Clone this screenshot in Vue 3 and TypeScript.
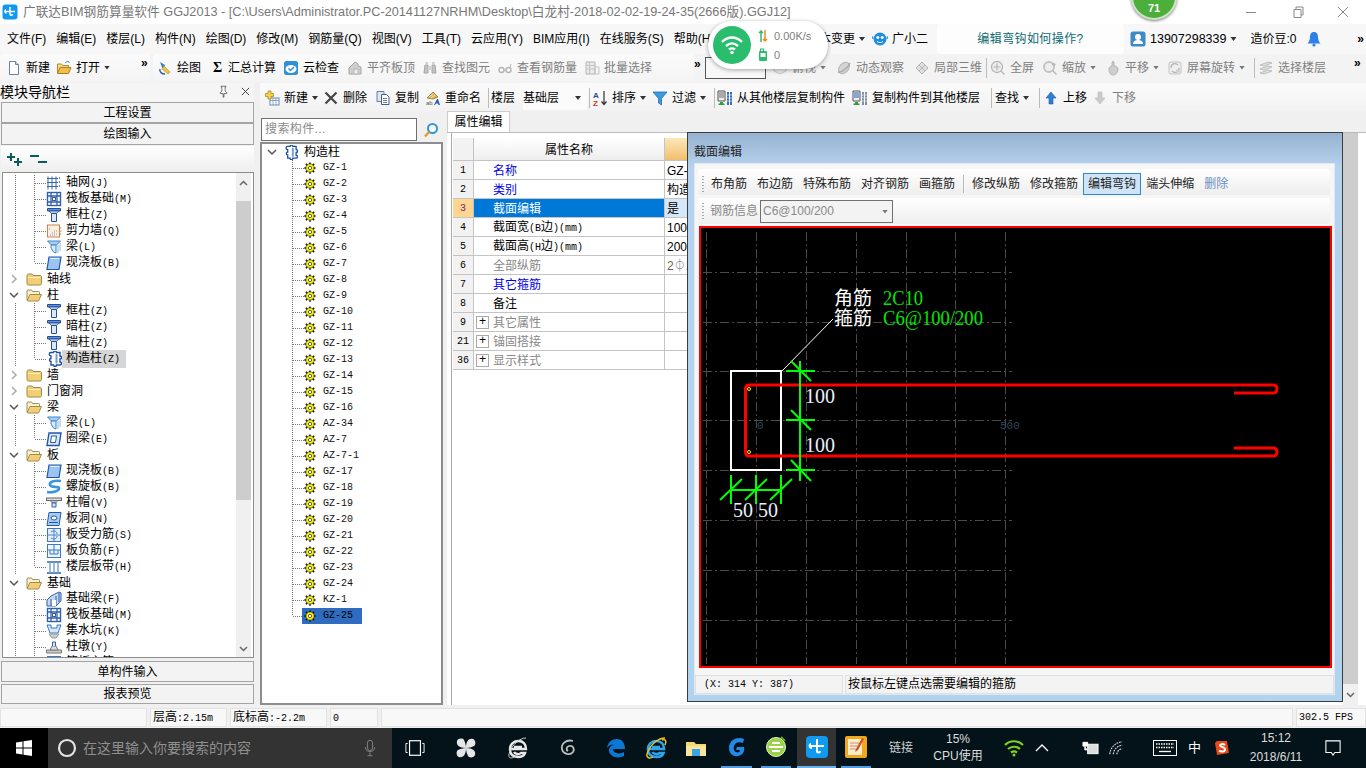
<script setup lang="ts">
type Tool = { ic?: string; label?: string; w: number; dis?: boolean; caret?: boolean; sep?: boolean; more?: boolean }
type NavRow = { t: string; ic: string; group?: boolean; open?: boolean; last?: boolean; sel?: boolean }

const icons: Record<string, string> = {
  doc: '<path d="M3.5 1.5h6l3 3v10h-9z" fill="#fff" stroke="#6f8099"/><path d="M9.5 1.5v3h3" fill="#cfd9e6" stroke="#6f8099"/>',
  open: '<path d="M1.5 13V4h4l1 1.5h6V8" fill="#f6dc8a" stroke="#b08a2c"/><path d="M1.5 13.5l2.5-6h11l-2.5 6z" fill="#f2bf4a" stroke="#a87f22"/><path d="M9 3l3-2 1.5 2" fill="none" stroke="#4a90d0"/>',
  draw: '<path d="M3 2l5 3-2 5z" fill="#3f7fd0"/><path d="M7 6l6 6-2 2-6-5z" fill="#f0c04a" stroke="#b08a2c" stroke-width=".6"/><path d="M3 9c-1 3 2 5 5 5" fill="none" stroke="#2a5ea8" stroke-width="1.4"/>',
  cloud: '<rect x="1" y="1" width="14" height="14" rx="2.5" fill="#2f8fd8"/><ellipse cx="8" cy="9" rx="5.5" ry="4" fill="#fff"/><path d="M5.5 8.5l2 2 3.500-3.500" fill="none" stroke="#2f8fd8" stroke-width="1.500"/>',
  plate: '<path d="M2 14V8l6-6 3 2v2l3 1v7z" fill="#c9c9c9" stroke="#999"/><path d="M7 14V9h4v5z" fill="#eee" stroke="#aaa"/>',
  binoc: '<path d="M2 13l1-8h3v8zM10 13V5h3l1 8z" fill="#bbb" stroke="#999"/><rect x="6" y="6" width="4" height="4" fill="#ccc"/><rect x="3.500" y="2" width="2.500" height="3" fill="#ccc"/><rect x="10" y="2" width="2.500" height="3" fill="#ccc"/>',
  glass: '<circle cx="4.500" cy="10" r="2.500" fill="none" stroke="#aaa" stroke-width="1.400"/><circle cx="11.500" cy="10" r="2.500" fill="none" stroke="#aaa" stroke-width="1.400"/><path d="M7 10h2M13 8l1-4" stroke="#aaa" fill="none"/>',
  pick: '<path d="M2 2h9v12H2z" fill="#e8e8e8" stroke="#aaa"/><path d="M2 5.500h9M2 9h9M5.500 2v12M11 7h4v7h-4z" fill="none" stroke="#bbb"/>',
  top: '<path d="M2 6l6-3 6 3-6 3z" fill="#ddd" stroke="#aaa"/><path d="M2 6v5l6 3 6-3V6" fill="#e8e8e8" stroke="#bbb"/>',
  orbit: '<ellipse cx="8" cy="8" rx="4.500" ry="6.500" transform="rotate(40 8 8)" fill="#d0d0d0" stroke="#aaa"/><path d="M2 12C5 13 12 8 14 3" fill="none" stroke="#999" stroke-width="1.300"/>',
  cube: '<path d="M2 8l6-6 6 6-6 6z" fill="#ddd" stroke="#aaa"/><path d="M5 5l6 6M8 2l3 3M5 11l6-6" stroke="#aaa" fill="none"/>',
  zoomfull: '<circle cx="7" cy="7" r="5.500" fill="#eee" stroke="#aaa" stroke-width="1.300"/><path d="M7 3.500v7M3.500 7h7M11 11l3.500 3.500" stroke="#aaa" stroke-width="1.200"/>',
  zoom: '<circle cx="7" cy="7" r="5" fill="#eee" stroke="#bbb" stroke-width="2"/><path d="M11 11l3.500 3.500M12 3v3M10.500 4.500h3" stroke="#aaa" stroke-width="1.400"/>',
  pan: '<path d="M4 9c0-2 2-3 3-3V3l1-2 1 2v3c2 0 4 1 4 3 0 3-2 6-5 6S4 12 4 9z" fill="#c8c8c8" stroke="#aaa"/>',
  rotate: '<rect x="2" y="2" width="12" height="12" rx="2" fill="#eee" stroke="#bbb"/><path d="M4 8a4 4 0 0 1 7-3M12 8a4 4 0 0 1-7 3" fill="none" stroke="#aaa" stroke-width="1.300"/><circle cx="11" cy="11" r="2" fill="#ccc"/>',
  floors: '<path d="M2 5l8-3 4 1-8 3zM2 9l8-3 4 1-8 3zM2 13l8-3 4 1-8 3z" fill="#ddd" stroke="#aaa" stroke-width=".8"/>',
  plus: '<rect x="6" y="8" width="9" height="7" fill="#fff" stroke="#6a88b8"/><path d="M6 10.500h9M9 8v7M12 8v7" stroke="#6a88b8" stroke-width=".7"/><path d="M4 1h3v2.500h2.500v3H7V9H4V6.500H1.500v-3H4z" fill="#f5d34a" stroke="#a98a1c" stroke-width=".8"/>',
  x: '<path d="M2.500 2.500l11 11M13.500 2.500l-11 11" stroke="#444" stroke-width="2.200"/>',
  copy: '<path d="M2 1.500h7v10H2z" fill="#dce6f4" stroke="#6a7f9c"/><path d="M6.500 4.500h5l2.500 2.500v7.500H6.500z" fill="#fff" stroke="#44608c"/><path d="M8 8.500h4M8 10.500h4M8 12.500h4" stroke="#44608c" stroke-width=".8"/>',
  rename: '<path d="M2 8l6-6 5 5-5 2z" fill="#d9b24a" stroke="#8a6d20" stroke-width=".7"/><path d="M4 7l4-3M6 8l4-3" stroke="#fff" stroke-width=".7"/><text x="1" y="15" font-size="6" fill="#555" font-family="Liberation Sans">ab</text><path d="M9 15l3-6h1l2 6h-1.500l-.5-1.500h-2L10 15z" fill="#2a5ea8"/>',
  sort: '<text x="1" y="7.500" font-size="8" font-weight="700" fill="#1f4fa0" font-family="Liberation Sans">A</text><text x="1" y="15.500" font-size="8" font-weight="700" fill="#c0392b" font-family="Liberation Sans">Z</text><path d="M12 1v13M9.500 11.500l2.500 3 2.500-3" fill="none" stroke="#333" stroke-width="1.200"/>',
  funnel: '<path d="M1 2h14L9.500 8.500V15l-3-2V8.500z" fill="#3d9ae0" stroke="#1f6fb0" stroke-width=".8"/>',
  cfrom: '<path d="M1 1h7v10H1z" fill="#eee" stroke="#555"/><path d="M2 3h5M2 5h5M2 7h5" stroke="#444" stroke-width=".8"/><path d="M3 12h3v1.500h1.500v1.500H1.500v-1.500H3z" fill="#2e9e3e"/><path d="M10 2h2v13h-2zM13 2h2v13h-2z" fill="#3a6fc0"/><path d="M10 5h5M10 8h5M10 11h5" stroke="#fff" stroke-width=".6"/>',
  cto: '<path d="M1 1h7v10H1z" fill="#eee" stroke="#555"/><path d="M2 3h5M2 5h5M2 7h5" stroke="#1f5fc0" stroke-width="1"/><path d="M3 12h3v1.500h1.500v1.500H1.500v-1.500H3z" fill="#2e9e3e"/><path d="M10 2h2v13h-2zM13 2h2v13h-2z" fill="#7d8ea8"/><path d="M10 5h5M10 8h5M10 11h5" stroke="#fff" stroke-width=".6"/>',
  up: '<path d="M8 2l5 6h-3v6H6V8H3z" fill="#2f7fd8" stroke="#1c5ca8" stroke-width=".6"/>',
  down: '<path d="M8 14l5-6h-3V2H6v6H3z" fill="#c4c4c4" stroke="#b0b0b0" stroke-width=".6"/>',
  folder: '<path d="M1 4.500c0-1 .5-1.500 1.500-1.500h3.500l1 1.500h7c1 0 1.500.5 1.500 1.500v6.500c0 1-.5 1.500-1.500 1.500h-11.500C1.500 14 1 13.500 1 12.500z" fill="#f3cf72" stroke="#a08a58"/><path d="M2 6.500h12" stroke="#fff2c4"/>',
  folderopen: '<path d="M1 13V4c0-.7.4-1 1-1h3.500l1 1.500h6c.6 0 1 .3 1 1V7" fill="#fbf0c8" stroke="#a08a58"/><path d="M1 13.500l3-6h11.500l-3 6.500H2z" fill="#f3cf72" stroke="#a08a58"/>',
  grid: '<path d="M2 1.500v13M6 1.500v13M10 1.500v13M1 3.500h11M1 7.500h11M1 11.500h11" stroke="#3567b5" stroke-width="1" fill="none"/><path d="M13 3h2M13 7h2M13 11h2" stroke="#3567b5" stroke-width="1.500" stroke-dasharray="1 1"/>',
  raft: '<rect x="1.500" y="1.500" width="13" height="13" fill="#fff" stroke="#2f5fa8" stroke-width="1.400"/><path d="M1 5h14M1 11h14M5 1v14M11 1v14" stroke="#2f5fa8" stroke-width="1.300"/><rect x="6.500" y="6.500" width="3" height="3" fill="#fff" stroke="#2f5fa8"/>',
  column: '<path d="M1.500 1.500h13v2.500h-13z" fill="#5a8ed8" stroke="#264f96"/><path d="M3 4h10l-2.500 2.500h-5z" fill="#b9d2f0" stroke="#264f96" stroke-width=".8"/><path d="M5.500 6.500h5v8h-5z" fill="#dbe8f8" stroke="#264f96"/>',
  wall: '<rect x="1.500" y="2" width="12" height="12" fill="#fbeee2" stroke="#d2814a"/><path d="M3 6h2M6 10h3M4 12h6M8 8h4M10 11h2" stroke="#999" stroke-dasharray="1 1"/><path d="M13.500 5h2M13.500 8h2M13.500 11h2" stroke="#d2814a"/>',
  beam: '<path d="M1.500 2h13l-4 4h-5z" fill="#a9cdf0" stroke="#3a86d0"/><path d="M5 6h5v8l-2.500-1L5 9z" fill="#d8e9fa" stroke="#3a86d0"/><path d="M12 6v8M14 4v8" stroke="#8ab8e6"/>',
  slab: '<path d="M3 2h12l-2 12.500H1z" fill="#9cc4f0" stroke="#1f57b0" stroke-width="1.200"/><path d="M4 3.500h9" stroke="#e4f0fc"/>',
  ring: '<path d="M3 2h12l-2 12.500H1z" fill="#dbe9f8" stroke="#1f57b0" stroke-width="1.400"/><path d="M5.500 5h5l-1 6.500h-5z" fill="#fff" stroke="#1f57b0"/>',
  puzzle: '<path d="M5 1.500h2.500a1.500 1.500 0 0 1 3 0H14V5a1.500 1.500 0 0 1 0 3v3a1.500 1.500 0 0 1 0 3h-3.500a1.500 1.500 0 0 1-3 0H5v-3.500a1.500 1.500 0 0 1 0-3V5a1.500 1.500 0 0 1 0-3.500z" fill="#fff" stroke="#1f4fa0" stroke-width="1.400"/><path d="M10.500 3v9.500" stroke="#6f9ad8" stroke-width="2"/>',
  spiral: '<path d="M15 2C8 1 3 3 4 6c1 3 8 1 9 3 1 3-7 5-12 4" fill="none" stroke="#3a94e0" stroke-width="2.600"/>',
  cap: '<rect x="0.500" y="3" width="15" height="2.500" fill="#ddd" stroke="#666"/><path d="M4 5.500h8L10 8H6z" fill="#bbb" stroke="#666" stroke-width=".6"/><path d="M6 8h4v4H6z" fill="#d9e8f8" stroke="#2f5fa8"/>',
  hole: '<path d="M3 1.500h12l-2 13H1z" fill="#a9cbf0" stroke="#1f57b0"/><ellipse cx="8" cy="7" rx="3" ry="2" fill="#fff" stroke="#1f57b0"/><path d="M3 11.500h9" stroke="#1f57b0"/>',
  rebar: '<rect x="1.500" y="1.500" width="13" height="13" fill="#e4eefa" stroke="#3a78c8"/><path d="M8 1.500v13M2 8h12M5 5c3-2 6-1 6 2M5 11c3 2 6 1 6-2" fill="none" stroke="#3a78c8" stroke-width=".9"/>',
  neg: '<rect x="1.500" y="1.500" width="13" height="13" fill="#eef5fc" stroke="#3a78c8"/><path d="M2 7h12M8 1.500V11M4 7v4h8V7" fill="none" stroke="#3a78c8"/>',
  band: '<path d="M1 3h14M1 14h14" stroke="#2f5fa8" stroke-width="1.300"/><path d="M4 3v11M8 3v11M12 3v11" stroke="#7aa2d8" stroke-width="1.500"/>',
  fbeam: '<path d="M1 15V9l4-4 8-4 2 1v8l-5 5z" fill="#c3d9f2" stroke="#2f5fa8"/><path d="M5 15V8M10 14V5M13 2v9" stroke="#2f5fa8"/><path d="M6 9h4v6H6z" fill="#fff"/>',
  pit: '<path d="M1 2h4v3h6V2h4l-3 8H4z" fill="#d9e8f8" stroke="#3a78c8"/><path d="M3 11h10l-3 4H6z" fill="#ccc" stroke="#999"/>',
  pier: '<path d="M0.500 11h15v3h-15z" fill="#ccc" stroke="#777"/><path d="M4 11l2-4h4l2 4z" fill="#ddd" stroke="#777"/><path d="M6.500 7V3h3v4" fill="#d9e8f8" stroke="#2f5fa8"/>',
  gear: '<path d="M8 .5v3M8 12.500v3M.5 8h3M12.500 8h3M2.500 2.500l2 2M11.500 11.500l2 2M13.500 2.500l-2 2M4.500 11.500l-2 2" stroke="#111" stroke-width="2"/><circle cx="8" cy="8" r="5.500" fill="#fff200" stroke="#222" stroke-width=".8"/><circle cx="8" cy="8" r="2.200" fill="#fff" stroke="#333" stroke-width="1"/>',
  search: '<circle cx="9.500" cy="6.500" r="4.500" fill="#fff" stroke="#2f95d8" stroke-width="2"/><path d="M6 10l-4 4.500" stroke="#e89a2a" stroke-width="2.400"/>',
  pin: '<path d="M5 1.500h6v1H10v5l2 2v1H8.500V15h-1v-4.500H4v-1l2-2v-5H5z" fill="#fff" stroke="#333" stroke-width=".8"/>',
  blob: '<circle cx="8" cy="8" r="6.500" fill="#1e8fe0"/><circle cx="5.800" cy="6.500" r="1.500" fill="#fff"/><circle cx="10.200" cy="6.500" r="1.500" fill="#fff"/><path d="M5 10.500c2 1.500 4 1.500 6 0" stroke="#fff" fill="none"/><path d="M1 8L0 5M15 8l1-3" stroke="#1e8fe0"/>',
  user: '<rect x="0.500" y="0.500" width="15" height="15" rx="2.500" fill="#3d8ac8"/><circle cx="8" cy="6" r="3" fill="#fff"/><path d="M3 13c0-3 2.500-4 5-4s5 1 5 4z" fill="#fff"/>',
  bell: '<path d="M8 1c3 0 4 2.500 4 5 0 3 1 5 2.500 6.500h-13C3 11 4 9 4 6c0-2.500 1-5 4-5z" fill="#2f7fe8"/><circle cx="8" cy="14" r="1.600" fill="#2f7fe8"/>'
}

const row1a: Tool[] = [
  { ic: 'doc', label: '新建', w: 50 },
  { ic: 'open', label: '打开', w: 64, caret: true }
]
const row1b: Tool[] = [
  { ic: 'draw', label: '绘图', w: 54 },
  { label: '汇总计算', w: 72, ic: 'sigma' },
  { ic: 'cloud', label: '云检查', w: 64 },
  { ic: 'plate', label: '平齐板顶', w: 75, dis: true },
  { ic: 'binoc', label: '查找图元', w: 75, dis: true },
  { ic: 'glass', label: '查看钢筋量', w: 87, dis: true },
  { ic: 'pick', label: '批量选择', w: 70, dis: true }
]
const row1c: Tool[] = [
  { ic: 'orbit', label: '动态观察', w: 78, dis: true },
  { ic: 'cube', label: '局部三维', w: 69, dis: true },
  { sep: true, w: 7 },
  { ic: 'zoomfull', label: '全屏', w: 52, dis: true },
  { ic: 'zoom', label: '缩放', w: 63, dis: true, caret: true },
  { ic: 'pan', label: '平移', w: 62, dis: true, caret: true },
  { ic: 'rotate', label: '屏幕旋转', w: 83, dis: true, caret: true },
  { sep: true, w: 8 },
  { ic: 'floors', label: '选择楼层', w: 74, dis: true }
]
const row2a: Tool[] = [
  { ic: 'plus', label: '新建', w: 59, caret: true },
  { ic: 'x', label: '删除', w: 52 },
  { ic: 'copy', label: '复制', w: 50 },
  { ic: 'rename', label: '重命名', w: 61 },
  { sep: true, w: 5 }
]
const row2b: Tool[] = [
  { sep: true, w: 5 },
  { ic: 'sort', label: '排序', w: 60, caret: true },
  { ic: 'funnel', label: '过滤', w: 59, caret: true },
  { sep: true, w: 6 },
  { ic: 'cfrom', label: '从其他楼层复制构件', w: 135 },
  { ic: 'cto', label: '复制构件到其他楼层', w: 135 },
  { sep: true, w: 8 },
  { label: '查找', w: 40, caret: true },
  { sep: true, w: 8 },
  { ic: 'up', label: '上移', w: 49 },
  { ic: 'down', label: '下移', w: 50, dis: true }
]

const menus = ['文件(F)', '编辑(E)', '楼层(L)', '构件(N)', '绘图(D)', '修改(M)', '钢筋量(Q)', '视图(V)', '工具(T)', '云应用(Y)', 'BIM应用(I)', '在线服务(S)', '帮助(H)']
const sectionTools = ['布角筋', '布边筋', '特殊布筋', '对齐钢筋', '画箍筋', '|', '修改纵筋', '修改箍筋', '编辑弯钩', '端头伸缩', '删除']

const navRows: NavRow[] = [
  { t: '轴网(J)', ic: 'grid' }, { t: '筏板基础(M)', ic: 'raft' }, { t: '框柱(Z)', ic: 'column' },
  { t: '剪力墙(Q)', ic: 'wall' }, { t: '梁(L)', ic: 'beam' }, { t: '现浇板(B)', ic: 'slab', last: true },
  { t: '轴线', ic: 'folder', group: true },
  { t: '柱', ic: 'folderopen', group: true, open: true },
  { t: '框柱(Z)', ic: 'column' }, { t: '暗柱(Z)', ic: 'column' }, { t: '端柱(Z)', ic: 'column' },
  { t: '构造柱(Z)', ic: 'puzzle', last: true, sel: true },
  { t: '墙', ic: 'folder', group: true },
  { t: '门窗洞', ic: 'folder', group: true },
  { t: '梁', ic: 'folderopen', group: true, open: true },
  { t: '梁(L)', ic: 'beam' }, { t: '圈梁(E)', ic: 'ring', last: true },
  { t: '板', ic: 'folderopen', group: true, open: true },
  { t: '现浇板(B)', ic: 'slab' }, { t: '螺旋板(B)', ic: 'spiral' }, { t: '柱帽(V)', ic: 'cap' },
  { t: '板洞(N)', ic: 'hole' }, { t: '板受力筋(S)', ic: 'rebar' }, { t: '板负筋(F)', ic: 'neg' },
  { t: '楼层板带(H)', ic: 'band', last: true },
  { t: '基础', ic: 'folderopen', group: true, open: true },
  { t: '基础梁(F)', ic: 'fbeam' }, { t: '筏板基础(M)', ic: 'raft' }, { t: '集水坑(K)', ic: 'pit' },
  { t: '柱墩(Y)', ic: 'pier' }, { t: '筏板主筋(R)', ic: 'rebar' }
]

const gzNames = [
  ...Array.from({ length: 16 }, (_, i) => `GZ-${i + 1}`),
  'AZ-34', 'AZ-7', 'AZ-7-1',
  ...Array.from({ length: 8 }, (_, i) => `GZ-${i + 17}`),
  'KZ-1', 'GZ-25'
]

const props = [
  { n: '1', name: '名称', val: 'GZ-25', cls: 'blue' },
  { n: '2', name: '类别', val: '构造柱', cls: 'blue' },
  { n: '3', name: '截面编辑', val: '是', cls: 'picked' },
  { n: '4', name: '截面宽(B边)(mm)', val: '100', cls: '' },
  { n: '5', name: '截面高(H边)(mm)', val: '200', cls: '' },
  { n: '6', name: '全部纵筋', val: '2⏀10', cls: 'gray' },
  { n: '7', name: '其它箍筋', val: '', cls: 'blue' },
  { n: '8', name: '备注', val: '', cls: '' },
  { n: '9', name: '其它属性', val: '', cls: 'gray', plus: true },
  { n: '21', name: '锚固搭接', val: '', cls: 'gray', plus: true },
  { n: '36', name: '显示样式', val: '', cls: 'gray', plus: true }
]

const statusCells = [
  { t: '层高:2.15m', w: 77 },
  { t: '底标高:-2.2m', w: 97 },
  { t: '0', w: 48 }
]

// ascii runs get the narrow mono face, as SimSun half-width glyphs do
function runs(s: string) {
  return s.split(/([\x00-\x7f]+)/).filter(Boolean).map(p => ({ p, a: /^[\x00-\x7f]/.test(p) }))
}

const gridX = [706, 756, 806, 856, 906, 955, 1005]
const gridY = [272, 322, 371, 420, 470, 520, 570, 620]

const taskIcons = [
  { k: 'fan', w: 50, ml: 0 }, { k: 'ie0', w: 54, ml: 0 }, { k: 'swirl', w: 46, ml: 0 }, { k: 'edge', w: 50, ml: 0 }, { k: 'ie', w: 30, ml: 0 },
  { k: 'files', w: 50, ml: 0 }, { k: 'g', w: 31, ml: 0 }, { k: 'e360', w: 30, ml: 9 }, { k: 'glodon', w: 39, ml: 6 }, { k: 'note', w: 30, ml: 5 }
]
const taskSvg: Record<string, string> = {
  fan: '<path d="M12 12C5 12 2 9 3 5c1-3 6-3 7-1 1 2 2 5 2 8zM12 12c0-7 3-10 7-9 3 1 3 6 1 7-2 1-5 2-8 2zM12 12c7 0 10 3 9 7-1 3-6 3-7 1-1-2-2-5-2-8zM12 12c0 7-3 10-7 9-3-1-3-6-1-7 2-1 5-2 8-2z" fill="#e6e6e6"/>',
  ie0: '<path d="M4 13h16c0-5-3-8-7.500-8S4 8 4 13c0 5 3 8 8 8 3 0 6-1 7-4h-4c-2 2-6 1-7-1M8 11h8" fill="none" stroke="#e8e8e8" stroke-width="2.400"/><path d="M20 2C14 2 6 8 3 18c-1 4 2 5 5 3" fill="none" stroke="#d0d0d0" stroke-width="1"/>',
  swirl: '<path d="M17 5C10 3 5 8 6 13c1 5 8 7 11 3 2-3 0-7-4-6-3 1-3 4-1 5" fill="none" stroke="#bdbdbd" stroke-width="1.800"/>',
  edge: '<path d="M3 12C4 6 8 3 13 3c5 0 8 4 8 10H9c0 4 6 6 11 3v4c-6 3-14 1-15-5-.5-3 2-6 5-6-3-1-5 0-7 3z" fill="#0a78d7"/>',
  ie: '<path d="M5 13h15c0-5-3-8-7.500-8S4 8 4 13c0 5 3 8 8.500 8 3 0 6-1 7-4h-4c-2 2-6 1-7-1M8 11h8" fill="none" stroke="#2ea5ea" stroke-width="2.600"/><path d="M21 2C15 2 6 8 3 18c-1 4 3 5 6 3M18 4c3-1 5 0 3 5" fill="none" stroke="#f3c11f" stroke-width="1.400"/>',
  files: '<path d="M2 6h8l2 2h10v12H2z" fill="#f7d774"/><path d="M2 10h20v10H2z" fill="#fbe59a"/><path d="M8 13h8v7H8z" fill="#3aa3e8"/>',
  g: '<path d="M19 4C11 1 4 6 4 13c0 6 5 9 9 8 5-1 7-5 6-9h-7l-1 3h4c0 2-2 3-4 2-3-1-3-6 0-9 2-1 5-1 7 0z" fill="#1f8ae8"/>',
  e360: '<circle cx="12" cy="12" r="9.500" fill="#9bd24a" stroke="#e6f5c8"/><path d="M5 12h14M8 8h8M8 16h8" stroke="#fff" stroke-width="1.800"/><path d="M17 2l4 4" stroke="#5fa828" stroke-width="2"/>',
  glodon: '<rect x="1" y="1" width="22" height="22" rx="4" fill="#0f9af0"/><path d="M12 4v12c0 2 3 2 3 0M5 11h14M6 9c-2 0-2 4 1 4" fill="none" stroke="#fff" stroke-width="2"/>',
  note: '<rect x="1" y="1" width="22" height="22" rx="2" fill="#f0a91f"/><path d="M4 4h14v16H4z" fill="#fbeec8"/><path d="M6 8h10M6 11h10M6 14h7" stroke="#c88"/><path d="M18 3l-6 11-1 3 3-2 6-11z" fill="#d2541c"/>'
}
</script>

<template>
  <div class="win">
    <header class="title">
      <svg class="logo" viewBox="0 0 16 16"><rect x=".5" y=".5" width="15" height="15" rx="3" fill="#0f9af0"/><path d="M8 3v7c0 1.500 2.500 1.500 2.500 0M3 7.500h10M4 6c-1.500 0-1.500 3 .5 3" fill="none" stroke="#fff" stroke-width="1.500"/></svg>
      <span class="title-text">广联达BIM钢筋算量软件 GGJ2013 - [C:\Users\Administrator.PC-20141127NRHM\Desktop\白龙村-2018-02-02-19-24-35(2666版).GGJ12]</span>
      <div class="winbtns">
        <svg viewBox="0 0 46 20"><path d="M18 10.500h10" stroke="#888"/></svg>
        <svg viewBox="0 0 46 20"><path d="M20 7.500h7v8h-7zM22 7V5h7v8h-2" fill="none" stroke="#888"/></svg>
        <svg viewBox="0 0 46 20"><path d="M18 5l10 10M28 5L18 15" stroke="#888"/></svg>
      </div>
    </header>

    <nav class="menubar">
      <div class="menus">
        <span v-for="m in menus" :key="m">{{ m }}</span>
      </div>
      <div class="menu-extra">
        <span>版本变更</span><i class="caret" />
        <svg class="ic" viewBox="0 0 16 16" v-html="icons.blob" />
        <span>广小二</span>
      </div>
      <div class="ask">编辑弯钩如何操作?</div>
      <div class="account">
        <svg class="ic" viewBox="0 0 16 16" v-html="icons.user" />
        <span class="phone">13907298339</span><i class="caret" />
        <span class="beans">造价豆:0</span>
        <svg class="ic" viewBox="0 0 16 16" v-html="icons.bell" />
        <b class="more">»</b>
      </div>
    </nav>

    <div class="toolbar1">
      <div class="tgroup g1">
        <span v-for="t in row1a" :key="t.label" class="tool" :class="{ dis: t.dis }" :style="{ width: t.w + 'px' }">
          <svg class="ic" viewBox="0 0 16 16" v-html="icons[t.ic!]" />{{ t.label }}<i v-if="t.caret" class="caret" />
        </span>
        <b class="more g1-more">»</b>
      </div>
      <div class="tgroup g2">
        <span v-for="t in row1b" :key="t.label" class="tool" :class="{ dis: t.dis }" :style="{ width: t.w + 'px' }">
          <b v-if="t.ic === 'sigma'" class="sigma">Σ</b>
          <svg v-else class="ic" viewBox="0 0 16 16" v-html="icons[t.ic!]" />{{ t.label }}
        </span>
      </div>
      <b class="more g3-more">»</b>
      <div class="viewbox" />
      <span class="tool dis view-peek"><svg class="ic" viewBox="0 0 16 16" v-html="icons.top" />俯视<i class="caret" /></span>
      <span v-for="(t, i) in row1c" :key="i" :class="t.sep ? 'sep-cell' : ['tool', { dis: t.dis }]" :style="{ width: t.w + 'px' }">
        <i v-if="t.sep" class="sep" />
        <template v-else><svg class="ic" viewBox="0 0 16 16" v-html="icons[t.ic!]" />{{ t.label }}<i v-if="t.caret" class="caret" /></template>
      </span>
      <b class="more end-more">»</b>
    </div>

    <div class="work">
      <aside class="nav">
        <div class="nav-head">
          <span>模块导航栏</span>
          <svg class="ic pin" viewBox="0 0 16 16" v-html="icons.pin" />
          <svg class="navx" viewBox="0 0 10 10"><path d="M1 1l8 8M9 1L1 9" stroke="#333" /></svg>
        </div>
        <div class="nav-btn">工程设置</div>
        <div class="nav-btn second">绘图输入</div>
        <div class="nav-tools">
          <svg viewBox="0 0 20 16"><path d="M5 2v8M1 6h8M12 7v8M8 11h8" stroke="#0b5c5c" stroke-width="2" /></svg>
          <svg viewBox="0 0 20 16"><path d="M1 5h9M9 11h9" stroke="#0b5c5c" stroke-width="2" /></svg>
        </div>
        <div class="nav-body">
          <div class="nav-scroll">
            <div v-for="(r, i) in navRows" :key="i" class="nrow">
              <template v-if="r.group">
                <span class="chev">
                  <svg viewBox="0 0 10 10"><path :d="r.open ? 'M1 3l4 4 4-4' : 'M3 1l4 4-4 4'" fill="none" :stroke="r.open ? '#555' : '#aaa'" stroke-width="1.500" /></svg>
                </span>
                <svg class="ic" viewBox="0 0 16 16" v-html="icons[r.ic]" />
                <span class="nlabel glabel"><span v-for="(q, j) in runs(r.t)" :key="j" :class="{ mono: q.a }">{{ q.p }}</span></span>
              </template>
              <template v-else>
                <span class="g-a" />
                <span class="g-b" :class="{ last: r.last }" />
                <span class="g-c" />
                <svg class="ic" viewBox="0 0 16 16" v-html="icons[r.ic]" />
                <span class="nlabel" :class="{ sel: r.sel }"><span v-for="(q, j) in runs(r.t)" :key="j" :class="{ mono: q.a }">{{ q.p }}</span></span>
              </template>
            </div>
          </div>
          <div class="vscroll navs">
            <svg viewBox="0 0 15 16"><path d="M4 10l3.500-3.500L11 10" fill="none" stroke="#666" stroke-width="1.500" /></svg>
            <div class="thumb" />
            <div class="track" />
            <svg viewBox="0 0 15 16"><path d="M4 6l3.500 3.500L11 6" fill="none" stroke="#666" stroke-width="1.500" /></svg>
          </div>
        </div>
        <div class="nav-btn">单构件输入</div>
        <div class="nav-btn last-btn">报表预览</div>
      </aside>

      <section class="right">
        <div class="toolbar2">
          <span v-for="t in row2a" :key="t.w + (t.label || 's')" :class="t.sep ? 'sep-cell' : 'tool'" :style="{ width: t.w + 'px' }">
            <i v-if="t.sep" class="sep" />
            <template v-else><svg class="ic" viewBox="0 0 16 16" v-html="icons[t.ic!]" />{{ t.label }}<i v-if="t.caret" class="caret" /></template>
          </span>
          <span class="floor-lbl">楼层</span>
          <span class="floor-box">基础层<i class="caret" /></span>
          <span v-for="(t, i) in row2b" :key="i" :class="t.sep ? 'sep-cell' : ['tool', { dis: t.dis }]" :style="{ width: t.w + 'px' }">
            <i v-if="t.sep" class="sep" />
            <template v-else><svg v-if="t.ic" class="ic" viewBox="0 0 16 16" v-html="icons[t.ic]" /><span>{{ t.label }}</span><i v-if="t.caret" class="caret" /></template>
          </span>
        </div>

        <div class="panes">
          <div class="complist">
            <div class="searchrow">
              <div class="searchbox">搜索构件...</div>
              <svg class="ic searchic" viewBox="0 0 16 16" v-html="icons.search" />
            </div>
            <div class="comptree">
              <div class="crow root">
                <span class="cchev"><svg viewBox="0 0 10 10"><path d="M1 3l4 4 4-4" fill="none" stroke="#555" stroke-width="1.500" /></svg></span>
                <svg class="ic" viewBox="0 0 16 16" v-html="icons.puzzle" />
                <span class="rootlabel">构造柱</span>
              </div>
              <div v-for="(g, i) in gzNames" :key="g" class="crow">
                <span class="cg-b" :class="{ last: i === gzNames.length - 1 }" />
                <span class="cg-c" />
                <svg class="gear" viewBox="0 0 16 16" v-html="icons.gear" />
                <span class="gzlabel" :class="{ on: g === 'GZ-25' }">{{ g }}</span>
              </div>
            </div>
          </div>

          <div class="propspane">
            <div class="tabs"><span class="tab">属性编辑</span></div>
            <div class="propbody">
              <div class="ptable">
                <div class="prow phead">
                  <span class="pn" /><span class="pname">属性名称</span><span class="pval" />
                </div>
                <div v-for="p in props" :key="p.n" class="prow" :class="p.cls">
                  <span class="pn">{{ p.n }}</span>
                  <span class="pname">
                    <i v-if="p.plus" class="plusbox">+</i>
                    <span class="ptext"><span v-for="(q, j) in runs(p.name)" :key="j" :class="{ mono: q.a }">{{ q.p }}</span></span>
                  </span>
                  <span class="pval">{{ p.val }}</span>
                </div>
              </div>
              <div class="vscroll props-s">
                <div class="thumb grow" />
                <svg viewBox="0 0 15 16"><path d="M4 6l3.500 3.500L11 6" fill="none" stroke="#666" stroke-width="1.500" /></svg>
              </div>
            </div>
          </div>
        </div>
      </section>
    </div>

    <footer class="status">
      <span class="sc first-cell" />
      <span v-for="c in statusCells" :key="c.t" class="sc" :style="{ width: c.w + 'px' }"><span v-for="(q, j) in runs(c.t)" :key="j" :class="{ mono: q.a }">{{ q.p }}</span></span>
      <span class="sc flexcell" />
      <span class="sc fps">302.5 FPS</span>
    </footer>

    <div class="taskbar">
      <div class="start"><svg viewBox="0 0 16 16"><path d="M0 2.500l6.500-1v6H0zM7.500 1.300L16 0v7.500H7.500zM0 8.500h6.500v6l-6.500-1zM7.500 8.500H16V16l-8.500-1.300z" fill="#fff" /></svg></div>
      <div class="tsearch">
        <svg class="cortana" viewBox="0 0 20 20"><circle cx="10" cy="10" r="8" fill="none" stroke="#e4e4e4" stroke-width="2.200" /></svg>
        <span>在这里输入你要搜索的内容</span>
        <svg class="mic" viewBox="0 0 14 20"><rect x="4" y="1" width="6" height="12" rx="3" fill="none" stroke="#8a8a8a" /><path d="M1.500 9c0 7 11 7 11 0M7 15v4M4 19h6" fill="none" stroke="#8a8a8a" /></svg>
      </div>
      <svg class="taskview" viewBox="0 0 22 18"><rect x="5" y="1" width="12" height="16" fill="none" stroke="#fff" stroke-width="1.300" /><path d="M3 4H1v10h2M19 4h2v10h-2" fill="none" stroke="#fff" /></svg>
      <span v-for="t in taskIcons" :key="t.k" class="tapp" :class="[t.k]" :style="{ width: t.w + 'px', marginLeft: t.ml + 'px' }">
        <svg viewBox="0 0 24 24" v-html="taskSvg[t.k]" />
      </span>
      <span class="link">链接</span>
      <span class="cpu">15%<br>CPU使用</span>
      <svg class="twifi" viewBox="0 0 20 18"><path d="M1 6c5-5 13-5 18 0M4 10c3.500-3 8.500-3 12 0M7 13.500c2-1.500 4-1.500 6 0" fill="none" stroke="#7ed321" stroke-width="2.200" /><circle cx="10" cy="16" r="1.500" fill="#7ed321" /></svg>
      <svg class="tchev" viewBox="0 0 14 8"><path d="M1 7l6-6 6 6" fill="none" stroke="#fff" stroke-width="1.300" /></svg>
      <svg class="tplug" viewBox="0 0 18 14"><rect x="6" y="3" width="11" height="10" fill="#ddd" stroke="#fff" /><path d="M1 1h5v4H1zM3 5v4h3" fill="#fff" stroke="#fff" /></svg>
      <svg class="tnet" viewBox="0 0 16 16"><path d="M1 15C1 8 8 1 15 1M5 15c0-5 5-10 10-10M9 15c0-3 3-6 6-6" fill="none" stroke="#ddd" stroke-dasharray="2 1" stroke-width="1.300" /></svg>
      <svg class="tkbd" viewBox="0 0 24 16"><rect x=".5" y=".5" width="23" height="15" fill="none" stroke="#fff" /><path d="M3 4h18M3 7.500h18" stroke="#fff" stroke-dasharray="1.500 1" stroke-width="1.300" /><path d="M6 11.500h12" stroke="#fff" stroke-width="1.300" /></svg>
      <span class="tzh">中</span>
      <svg class="tsogou" viewBox="0 0 16 16"><path d="M3 1h10l2 12-12 2L1 3z" fill="#e8481c" /><path d="M11 5c-2-1.500-5-1-5 .5S11 7 11 9.500 7 12 5 10.500" fill="none" stroke="#fff" stroke-width="2" /></svg>
      <span class="clock">15:12<br>2018/6/11</span>
      <svg class="tnote" viewBox="0 0 18 18"><path d="M1 1h16v13h-6l-2 3-2-3H1z" fill="none" stroke="#fff" stroke-width="1.200" /></svg>
    </div>

    <!-- floating bits over the window -->
    <div class="dialog">
      <div class="dlg-title">截面编辑</div>
      <div class="dlg-inner">
        <div class="dlg-tools first">
          <i class="grip" />
          <template v-for="s in sectionTools" :key="s">
            <i v-if="s === '|'" class="sep" />
            <span v-else class="dtool" :class="{ active: s === '编辑弯钩', faded: s === '删除' }">{{ s }}</span>
          </template>
        </div>
        <div class="dlg-tools second">
          <i class="grip" />
          <span class="rebar-lbl">钢筋信息</span>
          <span class="combo">C6@100/200<i class="caret" /></span>
        </div>
        <svg class="canvas" viewBox="699 226 633 442">
          <rect x="700" y="227" width="631" height="440" fill="#000" stroke="#f00" stroke-width="2" />
          <g stroke="#4a4a4a" stroke-dasharray="9 3 2 3" fill="none">
            <path v-for="x in gridX" :key="x" :d="`M${x + .5} 232V664`" />
            <path v-for="y in gridY" :key="y" :d="`M703 ${y + .5}H1012`" />
          </g>
          <text x="757" y="429" class="dim0">0</text>
          <text x="1000" y="429" class="dim0">500</text>
          <path d="M782 371L833 319" stroke="#fff" fill="none" />
          <rect x="731" y="371" width="50" height="99" fill="none" stroke="#fff" stroke-width="2" />
          <path d="M1234 393H1273Q1277 393 1277 389Q1277 385 1273 385H749Q745.500 385 745.500 389V452Q745.500 456 749 456H1273Q1277 456 1277 452Q1277 448 1273 448H1234" fill="none" stroke="#f00" stroke-width="3" />
          <g fill="none" stroke="#ff0"><circle cx="749" cy="389" r="1.500" /><circle cx="749" cy="452" r="1.500" /></g>
          <g stroke="#0f0" stroke-width="2" fill="none">
            <path d="M800 361V481M786 371H815M786 420H815M786 470H815M791 361L811 381M791 410L811 430M791 460L811 481" />
            <path d="M731 490H781M731 475V504M756 475V504M781 475V504M720 500L742 479M745 500L767 479M770 500L792 479" />
          </g>
          <text x="834" y="305" class="cjk">角筋</text>
          <text x="834" y="325" class="cjk">箍筋</text>
          <text x="883" y="305" class="gtxt" textLength="40" lengthAdjust="spacingAndGlyphs">2C10</text>
          <text x="883" y="325" class="gtxt" textLength="100" lengthAdjust="spacingAndGlyphs">C6@100/200</text>
          <text x="805" y="403" class="wtxt">100</text>
          <text x="805" y="452" class="wtxt">100</text>
          <text x="733" y="517" class="wtxt">50</text>
          <text x="758" y="517" class="wtxt">50</text>
        </svg>
        <div class="dlg-status">
          <span class="ds-a">(X: 314 Y: 387)</span>
          <span class="ds-b">按鼠标左键点选需要编辑的箍筋</span>
        </div>
      </div>
    </div>

    <div class="netpill">
      <span class="wifi-disc">
        <svg viewBox="0 0 24 20"><path d="M2 7c6-6 14-6 20 0M6 11c4-3.500 8-3.500 12 0M9 14.500c2-1.500 4-1.500 6 0" fill="none" stroke="#fff" stroke-width="2.400" /><circle cx="12" cy="17.500" r="1.700" fill="#fff" /></svg>
      </span>
      <div class="net-lines">
        <span><svg viewBox="0 0 10 14"><path d="M3 13V2M1 4l2-2 2 2" fill="none" stroke="#2bbd6e" stroke-width="1.500" /><path d="M7 1v11M5 10l2 2 2-2" fill="none" stroke="#f0891f" stroke-width="1.500" /></svg>0.00K/s</span>
        <span><svg viewBox="0 0 10 14"><rect x="1" y="3" width="8" height="10" rx="1" fill="#2bbd6e" /><rect x="2.500" y="1" width="3" height="3" fill="none" stroke="#2bbd6e" /><rect x="2.500" y="5" width="5" height="4" fill="#fff" /></svg>0</span>
      </div>
    </div>

    <div class="score">71</div>
  </div>
</template>

<style scoped>
.win, .win * { box-sizing: border-box; }
.win {
  position: relative; width: 1366px; height: 768px; overflow: hidden;
  background: #f0f0f0; color: #000;
  font: 12px/16px "Liberation Sans", "Noto Sans CJK SC", sans-serif;
  display: flex; flex-direction: column;
}
.ic { width: 16px; height: 16px; flex: none; }
.mono { font-family: "Liberation Mono", monospace; font-size: 10px; }
.caret {
  display: inline-block; width: 6px; height: 4px; vertical-align: middle; flex: none;
  background: #333; clip-path: polygon(0 0, 100% 0, 50% 100%);
}
.sep { display: block; width: 1px; height: 20px; background: #bbb; }
.sep-cell { display: flex; align-items: center; justify-content: center; flex: none; }
.more { font: 700 12px/14px "Liberation Sans", sans-serif; }

/* title */
.title { height: 24px; flex: none; background: #fff; display: flex; align-items: center; padding-left: 2px; }
.logo { width: 16px; height: 16px; flex: none; }
.title-text { margin-left: 5px; font-size: 12.7px; color: #777; white-space: nowrap; }
.winbtns { margin-left: auto; display: flex; height: 20px; }
.winbtns svg { width: 46px; height: 20px; }

/* menu */
.menubar { height: 30px; flex: none; background: #f7f7f7; display: flex; align-items: center; font-size: 12px; }
.menus { display: flex; gap: 10px; padding-left: 7px; white-space: nowrap; width: 777px; flex: none; }
.menu-extra { display: flex; align-items: center; gap: 4px; width: 160px; flex: none; padding-left: 30px; white-space: nowrap; }
.menu-extra .ic { margin-left: 3px; }
.ask { width: 187px; flex: none; height: 30px; background: #fdfdfd; border-radius: 4px; color: #0d6b74; text-align: center; line-height: 30px; letter-spacing: .4px; }
.account { flex: 1; display: flex; align-items: center; padding-left: 6px; white-space: nowrap; }
.phone { margin: 0 4px 0 4px; font-size: 12.5px; }
.beans { margin-left: 14px; margin-right: 9px; }
.account .more { margin-left: auto; margin-right: 2px; }

/* top toolbar */
.toolbar1 { height: 29px; flex: none; background: #f3f3f3; display: flex; align-items: center; white-space: nowrap; position: relative; padding-bottom: 2px; }
.tgroup { height: 27px; display: flex; align-items: center; background: linear-gradient(#fbfbfb, #f4f4f4); border-radius: 3px; }
.g1 { width: 150px; padding-left: 6px; flex: none; }
.g1-more { margin-left: 21px; margin-bottom: 10px; }
.g2 { width: 541px; flex: none; margin-left: 3px; padding-left: 4px; }
.g3-more { width: 11px; margin-bottom: 8px; flex: none; }
.viewbox { width: 61px; height: 22px; border: 1px solid #555; background: #f8f8f8; flex: none; }
.view-peek { width: 70px; padding-left: 6px; }
.tool { display: inline-flex; align-items: center; gap: 4px; flex: none; white-space: nowrap; }
.tool.dis { color: #808080; }
.tool.dis .ic { opacity: .85; }
.tool.dis .caret { background: #777; }
.sigma { width: 13px; text-align: center; font: 700 14px/16px "Liberation Serif", serif; }
.end-more { margin-left: 22px; margin-bottom: 10px; }

/* layout */
.work { flex: 1; min-height: 0; display: flex; }

/* left nav */
.nav { width: 254px; flex: none; padding: 0 0 4px 1px; display: flex; flex-direction: column; }
.nav-head { height: 19px; flex: none; display: flex; align-items: center; font-size: 14px; margin-left: -1px; padding-bottom: 2px; background: #f5f5f5; }
.pin { margin-left: auto; width: 13px; height: 13px; margin-right: 11px; }
.navx { width: 9px; height: 9px; margin-right: 4px; }
.nav-btn { height: 21px; flex: none; background: #f3f3f3; border: 1px solid #a4a4a4; line-height: 20px; text-align: center; }
.nav-btn.second { height: 22px; line-height: 20px; }
.nav-btn.last-btn { margin-top: 2px; height: 20px; line-height: 19px; }
.nav-tools { height: 26px; flex: none; background: linear-gradient(#fff, #eeeeee); display: flex; align-items: center; gap: 3px; padding-left: 5px; margin-top: 1px; }
.nav-tools svg { width: 20px; height: 16px; }
.nav-body { flex: 1; min-height: 0; margin: 0 0 3px 1px; border: 1px solid #8d8d8d; background: #fff; display: flex; overflow: hidden; }
.nav-scroll { flex: 1; overflow: hidden; padding-top: 2px; }
.nrow { height: 16px; display: flex; align-items: center; white-space: nowrap; }
.chev { width: 23px; height: 16px; flex: none; display: flex; align-items: center; padding-left: 6px; }
.chev svg { width: 10px; height: 10px; }
.nlabel { margin-left: 4px; line-height: 16px; }
.glabel { margin-left: 5px; }
.g-a, .g-b { align-self: stretch; flex: none; background: linear-gradient(#777 50%, transparent 50%) right top / 1px 2px repeat-y; }
.g-a { width: 13px; }
.g-b { width: 19px; }
.g-b.last { align-self: flex-start; height: 8px; }
.g-c { width: 11px; height: 1px; flex: none; background: linear-gradient(90deg, #777 50%, transparent 50%) left top / 2px 1px repeat-x; }
.nlabel.sel { background: #d6d6d6; padding: 0 6px 0 4px; margin-left: 0; }
.vscroll { flex: none; background: #f0f0f0; display: flex; flex-direction: column; }
.vscroll svg { width: 15px; height: 16px; flex: none; }
.navs { width: 15px; margin-right: 2px; padding-top: 2px; }
.navs .thumb { height: 299px; margin-top: 10px; background: #cdcdcd; flex: none; }
.navs .track { flex: 1; }

/* right */
.right { flex: 1; min-width: 0; display: flex; flex-direction: column; padding-left: 6px; }
.toolbar2 { height: 28px; flex: none; display: flex; align-items: center; background: linear-gradient(#fbfbfb, #f2f2f2); white-space: nowrap; padding: 2px 0 0 4px; }
.floor-lbl { width: 32px; flex: none; }
.floor-box { width: 64px; flex: none; height: 24px; line-height: 24px; background: #fbfbfb; display: inline-flex; align-items: center; }
.floor-box .caret { margin-left: 16px; }
.panes { flex: 1; min-height: 0; display: flex; }

/* component list */
.complist { width: 183px; flex: none; display: flex; flex-direction: column; }
.searchrow { height: 31px; flex: none; display: flex; align-items: flex-end; padding-bottom: 1px; background: #f0f0f0; }
.searchbox { width: 156px; height: 23px; border: 1px solid #707070; background: #fff; color: #8a8a8a; line-height: 21px; padding-left: 3px; margin-left: 1px; letter-spacing: .4px; }
.searchic { margin: 0 0 3px 6px; }
.comptree { flex: 1; border: 2px solid #8d8d8d; background: #fff; margin-bottom: 3px; overflow: hidden; }
.crow { height: 16px; display: flex; align-items: center; white-space: nowrap; }
.cchev { width: 21px; flex: none; padding-left: 5px; display: flex; }
.cchev svg { width: 10px; height: 10px; }
.root .ic { width: 15px; height: 15px; }
.rootlabel { margin-left: 6px; }
.cg-b { width: 31px; flex: none; align-self: stretch; background: linear-gradient(#777 50%, transparent 50%) right top / 1px 2px repeat-y; }
.cg-b.last { align-self: flex-start; height: 8px; }
.cg-c { width: 11px; height: 1px; flex: none; background: linear-gradient(90deg, #777 50%, transparent 50%) left top / 2px 1px repeat-x; }
.gear { width: 12px; height: 12px; flex: none; position: relative; z-index: 1; }
.gzlabel { margin-left: 7px; font: 10px/16px "Liberation Mono", monospace; color: #111; }
.gzlabel.on { background: #2f6cc0; color: #000; margin-left: -14px; padding: 0 9px 0 21px; }

/* properties */
.propspane { flex: 1; min-width: 0; margin-left: 4px; display: flex; flex-direction: column; }
.tabs { height: 22px; flex: none; display: flex; align-items: flex-end; background: #f0f0f0; border-bottom: 1px solid #bbb; }
.tab { width: 63px; height: 21px; background: #fff; border: 1px solid #ccc; border-bottom: 0; text-align: center; line-height: 20px; }
.propbody { flex: 1; min-height: 0; display: flex; background: #fff; margin-bottom: 3px; }
.ptable { flex: 1; padding: 5px 0 0 1px; margin-left: 4px; font-size: 12px; border-left: 1px solid #aaa; }
.prow { display: grid; grid-template-columns: 21px 191px 1fr; height: 19px; border-bottom: 1px solid #c4c4c4; line-height: 18px; }
.prow > span { border-right: 1px solid #c4c4c4; display: flex; align-items: center; overflow: hidden; white-space: nowrap; padding-top: 1px; }
.phead { height: 23px; }
.phead .pname { justify-content: center; background: linear-gradient(#fff, #eee); padding-left: 0; }
.phead .pval { background: linear-gradient(#fce7b8, #f2bf6b); }
.pn { background: #f2f2f2; justify-content: center; font: 10px "Liberation Mono", monospace; }
.pname { padding-left: 19px; }
.pval { padding-left: 2px; }
.prow.blue .ptext { color: #0000e6; }
.prow.gray .ptext { color: #888; }
.prow.gray .pval { color: #666; }
.prow.picked .pn { background: #ffd590; color: #7a1f7a; }
.prow.picked .pname { background: #0078d7; color: #fff; }
.prow.picked .pval { background: #d6e8f8; }
.plusbox {
  width: 13px; height: 13px; border: 1px solid #aaa; margin-left: -17px; margin-right: 4px;
  font: normal 12px/11px "Liberation Mono", monospace; text-align: center; flex: none;
}
.props-s { width: 15px; margin-right: 8px; }
.props-s .grow { flex: 1; background: #cdcdcd; }
.props-s svg { margin: 3px 0 2px; }

/* status bar */
.status { height: 20px; flex: none; display: flex; gap: 3px; background: #f0f0f0; }
.sc { flex: none; height: 19px; background: #f8f8f8; border: 1px solid #e2e2e2; line-height: 17px; padding-left: 2px; white-space: nowrap; overflow: hidden; }
.first-cell { width: 147px; }
.flexcell { flex: 1; }
.fps { width: 70px; font: 10px/17px "Liberation Mono", monospace; }

/* taskbar */
.taskbar { height: 40px; flex: none; background: #04131a; display: flex; align-items: center; color: #fff; white-space: nowrap; }
.start { width: 48px; height: 40px; background: #000; display: flex; align-items: center; justify-content: center; flex: none; }
.start svg { width: 16px; height: 16px; }
.tsearch { width: 344px; height: 40px; flex: none; background: #333; display: flex; align-items: center; color: #8f8f8f; font-size: 14px; }
.cortana { width: 20px; height: 20px; margin: 0 6px 0 9px; flex: none; }
.mic { width: 12px; height: 20px; margin-left: auto; margin-right: 16px; }
.taskview { width: 20px; height: 18px; margin: 0 16px 0 13px; flex: none; }
.tapp { display: flex; align-items: center; justify-content: center; height: 40px; flex: none; }
.tapp svg { width: 24px; height: 24px; }
.tapp.g, .tapp.e360, .tapp.note { border-bottom: 2px solid #4f9fe0; }
.tapp.glodon { background: #333; border-bottom: 2px solid #6ab2ee; }
.link { width: 46px; margin-left: 7px; text-align: center; color: #cfcfcf; flex: none; }
.cpu { width: 72px; flex: none; text-align: center; font-size: 12px; line-height: 17px; color: #ddd; margin-left: -2px; }
.twifi { width: 20px; height: 18px; margin-left: 10px; flex: none; }
.tchev { width: 14px; height: 8px; margin-left: 11px; flex: none; }
.tplug { width: 17px; height: 14px; margin-left: 33px; flex: none; }
.tnet { width: 14px; height: 14px; margin-left: 10px; flex: none; }
.tkbd { width: 24px; height: 16px; margin-left: 30px; flex: none; }
.tzh { margin-left: 11px; font-size: 13px; flex: none; }
.tsogou { width: 16px; height: 16px; margin-left: 13px; flex: none; }
.clock { width: 66px; margin-left: 13px; text-align: center; font-size: 12px; line-height: 19px; color: #ddd; flex: none; }
.tnote { width: 16px; height: 18px; margin-left: 16px; flex: none; }

/* section dialog */
.dialog {
  position: absolute; left: 687px; top: 132px; width: 656px; height: 570px;
  border: 1px solid #3c3c3c; background: linear-gradient(#97b2d0, #b5d2ee 6%, #b0d4ef); display: flex; flex-direction: column;
  padding: 0 7px 6px 6px;
}
.dlg-title { height: 30px; flex: none; line-height: 38px; color: #222; font-size: 12px; }
.dlg-inner { flex: 1; min-height: 0; background: #f6f6f6; border: 1px solid #e4e8ee; display: flex; flex-direction: column; padding: 5px 0 0 3px; }
.dlg-tools { height: 26px; flex: none; display: flex; align-items: center; background: linear-gradient(#fff, #eee); margin-right: 4px; border-radius: 3px; padding-left: 4px; color: #222; }
.dlg-tools.first { padding-top: 3px; }
.dlg-tools.second { margin: 3px 4px 2px 0; }
.grip { width: 2px; height: 16px; margin-right: 2px; background: linear-gradient(#aaa 50%, transparent 50%) 0 0 / 2px 3px; flex: none; }
.second .grip { margin-right: 6px; }
.dtool { padding: 2px 4px; border: 1px solid transparent; white-space: nowrap; }
.dlg-tools .sep { margin: 0 3px; height: 18px; }
.dtool.active { background: #cfe4f7; border-color: #2f86c8; }
.dtool.faded { color: #6c8fc4; }
.rebar-lbl { color: #888; flex: none; }
.combo { width: 133px; height: 23px; flex: none; border: 1px solid #707070; color: #8a8a8a; line-height: 21px; padding-left: 2px; background: #f3f3f3; position: relative; font-size: 12px; margin-left: 2px; }
.combo .caret { position: absolute; right: 4px; top: 9px; background: #777; }
.canvas { width: 633px; height: 442px; flex: none; margin-left: 1px; display: block; }
.cjk { fill: #fff; font: 19px "Noto Sans CJK SC", sans-serif; }
.gtxt { fill: #00e600; font: 20px "Liberation Serif", serif; }
.wtxt { fill: #e8f0ff; font: 20px "Liberation Serif", serif; }
.dim0 { fill: #34465a; font: 11px "Liberation Mono", monospace; }
.dlg-status { height: 19px; flex: none; margin: 7px 0 0 -3px; display: flex; gap: 2px; }
.ds-a, .ds-b { background: #f3f3f3; border: 1px solid #e0e0e0; line-height: 17px; }
.ds-a { width: 148px; padding-left: 8px; font: 10px/17px "Liberation Mono", monospace; }
.ds-b { flex: 1; padding-left: 2px; }

/* network pill + score */
.netpill {
  position: absolute; left: 708px; top: 21px; width: 120px; height: 48px; background: #fff; border-radius: 24px;
  box-shadow: 0 1px 4px rgba(0,0,0,.35); display: flex; align-items: center; padding-left: 5px; gap: 4px;
}
.wifi-disc { width: 38px; height: 38px; border-radius: 50%; background: #2bbd6e; display: flex; align-items: center; justify-content: center; flex: none; }
.wifi-disc svg { width: 24px; height: 20px; }
.net-lines { display: flex; flex-direction: column; gap: 5px; color: #808080; font: 11px/14px "Liberation Sans", sans-serif; margin-left: 3px; }
.net-lines span { display: flex; align-items: center; gap: 6px; }
.net-lines svg { width: 10px; height: 14px; }
.score {
  position: absolute; left: 1131px; top: -26px; width: 46px; height: 46px; border-radius: 50%; background: #4caf3c;
  border: 2px solid #cfe3c5; box-shadow: 0 1px 3px rgba(0,0,0,.5); color: #fff; font: 700 11px/14px "Liberation Sans", sans-serif;
  text-align: center; padding-top: 25px;
}
</style>

<style>
html, body { margin: 0; overflow: hidden; background: #f0f0f0; }
</style>
